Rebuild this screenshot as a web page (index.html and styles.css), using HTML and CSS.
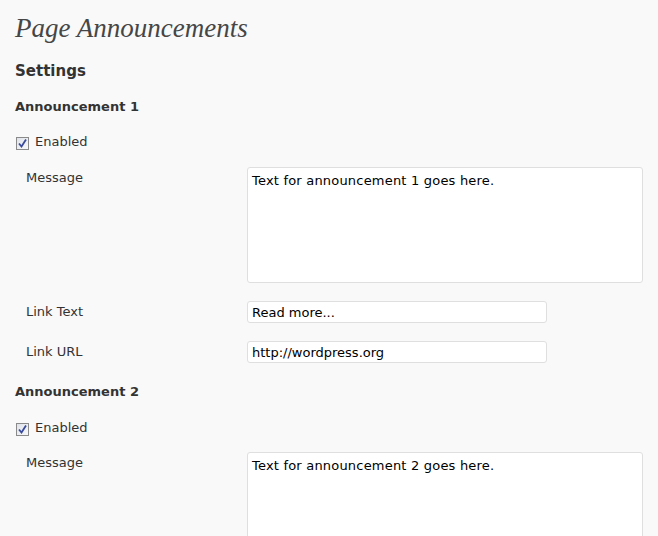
FILE: index.html
```html
<!DOCTYPE html>
<html>
<head>
<meta charset="utf-8">
<link rel="stylesheet" href="styles.css">
</head>
<body>
<div class="wrap">
  <h2 class="title">Page Announcements</h2>
  <h3 class="section">Settings</h3>

  <h4 class="ann">Announcement 1</h4>
  <label class="enabled"><span class="cb"><svg width="9" height="9" viewBox="0 0 9 9"><path d="M1 4.5 L3.5 7.5 L8 0.5" fill="none" stroke="#3a4a9a" stroke-width="1.8"/></svg></span>Enabled</label>
  <div class="form">
    <div class="row">
      <div class="label">Message</div>
      <div class="field"><div class="textarea">Text for announcement 1 goes here.</div></div>
    </div>
    <div class="row">
      <div class="label label-input">Link Text</div>
      <div class="field"><div class="input">Read more...</div></div>
    </div>
    <div class="row">
      <div class="label label-input">Link URL</div>
      <div class="field"><div class="input">http://wordpress.org</div></div>
    </div>
  </div>

  <h4 class="ann ann2">Announcement 2</h4>
  <label class="enabled enabled2"><span class="cb"><svg width="9" height="9" viewBox="0 0 9 9"><path d="M1 4.5 L3.5 7.5 L8 0.5" fill="none" stroke="#3a4a9a" stroke-width="1.8"/></svg></span>Enabled</label>
  <div class="form form2">
    <div class="row">
      <div class="label">Message</div>
      <div class="field"><div class="textarea">Text for announcement 2 goes here.</div></div>
    </div>
  </div>
</div>
</body>
</html>
```

FILE: styles.css
```css
html, body {
  margin: 0;
  padding: 0;
  background: #f9f9f9;
}
body {
  font-family: "DejaVu Sans", Verdana, sans-serif;
  font-size: 13px;
  color: #333;
  overflow: hidden;
  height: 536px;
}
.wrap {
  padding-left: 15px;
}
.title {
  margin: 13px 0 0 0;
  font-family: "Liberation Serif", Georgia, serif;
  font-style: italic;
  font-weight: normal;
  font-size: 27px;
  line-height: 30px;
  height: 30px;
  color: #464646;
}
.section {
  margin: 18px 0 0 0;
  font-size: 15px;
  font-weight: bold;
  line-height: 20px;
  color: #333;
}
.ann {
  margin: 16px 0 0 0;
  font-size: 13px;
  font-weight: bold;
  line-height: 20px;
  color: #333;
}
.ann2 {
  margin-top: 19px;
}
.enabled {
  display: flex;
  align-items: center;
  margin-top: 15px;
  line-height: 20px;
  height: 20px;
  color: #333;
}
.enabled2 {
  margin-top: 16px;
}
.cb {
  box-sizing: border-box;
  width: 13px;
  height: 13px;
  margin: 2px 6px 0 1px;
  border: 1px solid #8a8a8a;
  background: linear-gradient(135deg, #dfe3ea, #f7f8fa);
  display: flex;
  align-items: center;
  justify-content: center;
}
.cb svg {
  display: block;
}
.form {
  margin-top: 15px;
  display: flex;
  flex-direction: column;
  gap: 18px;
}
.form2 {
  margin-top: 14px;
}
.row {
  display: flex;
  align-items: flex-start;
}
.label {
  width: 221px;
  padding-left: 11px;
  padding-top: 1px;
  line-height: 20px;
  color: #333;
}
.label-input {
  padding-top: 0;
  line-height: 22px;
}
.textarea {
  box-sizing: border-box;
  width: 396px;
  height: 116px;
  background: #fff;
  border: 1px solid #dfdfdf;
  border-radius: 3px;
  padding: 3px 4px;
  line-height: 20px;
  letter-spacing: 0.2px;
  color: #000;
}
.input {
  box-sizing: border-box;
  width: 300px;
  height: 22px;
  background: #fff;
  border: 1px solid #dfdfdf;
  border-radius: 3px;
  padding: 0 4px;
  line-height: 21px;
  color: #000;
}
```
